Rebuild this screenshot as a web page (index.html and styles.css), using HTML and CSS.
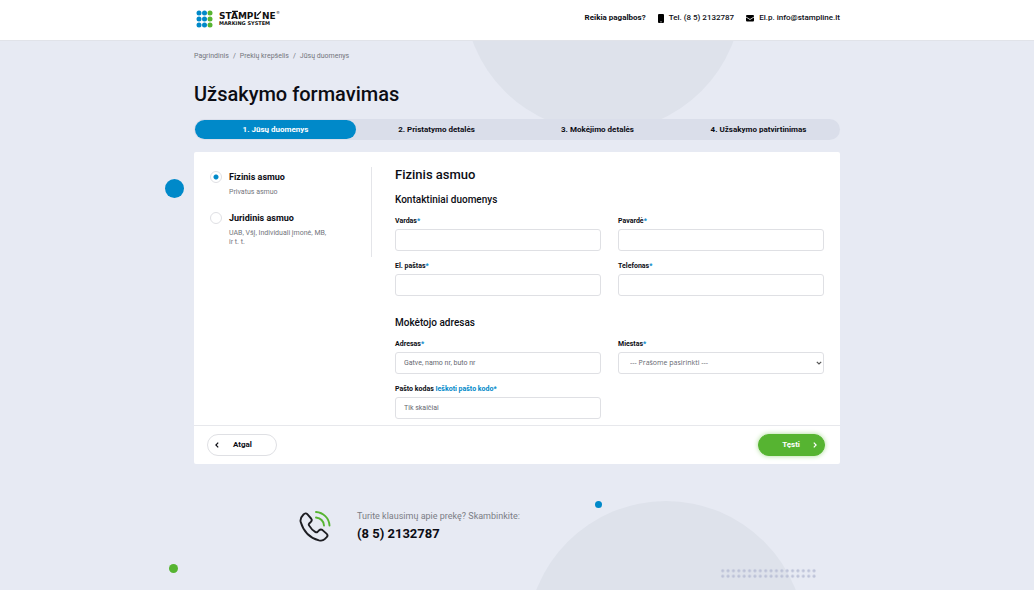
FILE: index.html
```html
<!DOCTYPE html>
<html lang="lt">
<head>
<meta charset="utf-8">
<meta name="viewport" content="width=device-width, initial-scale=1">
<title>Užsakymo formavimas</title>
<link rel="stylesheet" href="styles.css">
</head>
<body>
<header class="header">
  <div class="container header-row">
    <a class="logo" href="#" aria-label="Stampline Marking System">
      <svg width="86" height="20" viewBox="0 0 86 20">
        <g fill="#0089c9">
          <circle cx="5" cy="3" r="2.5"/><circle cx="10.5" cy="3" r="2.5"/>
          <circle cx="5" cy="9" r="2.5"/><circle cx="10.5" cy="9" r="2.5"/>
          <circle cx="5" cy="15" r="2.5"/><circle cx="10.5" cy="15" r="2.5"/>
        </g>
        <g fill="#56b431">
          <circle cx="16" cy="3" r="2.5"/><circle cx="16" cy="9" r="2.5"/><circle cx="16" cy="15" r="2.5"/>
        </g>
        <g class="logo-text">
          <text class="logo-name" x="25" y="9">STAMPL</text>
          <text class="logo-name" x="68" y="9">NE</text>
          <text class="logo-sub" x="25" y="15">MARKING SYSTEM</text>
          <text class="logo-mark" x="82" y="4">®</text>
        </g>
        <path d="M38 1.400h6M63 5.500l4-4" stroke="#111" stroke-width="1.100" fill="none"/>
      </svg>
    </a>
    <div class="contacts">
      <strong>Reikia pagalbos?</strong>
      <a class="contact" href="tel:+37052132787">
        <svg width="6" height="9" viewBox="0 0 6 9"><rect width="6" height="9" rx="1"/><circle cx="3" cy="7.8" r=".6" fill="#fff"/></svg>
        Tel. (8 5) 2132787
      </a>
      <a class="contact" href="mailto:info@stampline.lt">
        <svg width="8" height="7" viewBox="0 0 8 7"><rect width="8" height="6.5" rx="1"/><path d="M0 2l4 2.500L8 2" fill="none" stroke="#fff" stroke-width=".8"/></svg>
        El.p. info@stampline.lt
      </a>
    </div>
  </div>
</header>

<main class="page">
  <div class="decor" aria-hidden="true">
    <span class="blob blob-top"></span>
    <span class="blob blob-bottom"></span>
    <span class="dot dot-large"></span>
    <span class="dot dot-small"></span>
    <span class="dot dot-green"></span>
    <span class="dot-grid"></span>
  </div>
  <div class="container content">
    <nav class="crumbs" aria-label="Kelias">
      <a href="#">Pagrindinis</a><span>/</span><a href="#">Prekių krepšelis</a><span>/</span><a href="#">Jūsų duomenys</a>
    </nav>
    <h1 class="title">Užsakymo formavimas</h1>
    <ol class="steps">
      <li class="step step-active">1. Jūsų duomenys</li>
      <li class="step">2. Pristatymo detalės</li>
      <li class="step">3. Mokėjimo detalės</li>
      <li class="step">4. Užsakymo patvirtinimas</li>
    </ol>

    <form class="card">
      <div class="card-body">
        <div class="types">
          <div class="type">
            <input class="radio" type="radio" name="type" id="person" checked>
            <div>
              <label class="type-name" for="person">Fizinis asmuo</label>
              <p class="type-note">Privatus asmuo</p>
            </div>
          </div>
          <div class="type">
            <input class="radio" type="radio" name="type" id="company">
            <div>
              <label class="type-name" for="company">Juridinis asmuo</label>
              <p class="type-note">UAB, VšĮ, Individuali įmonė, MB,<br>ir t. t.</p>
            </div>
          </div>
        </div>
        <div class="fields">
          <h2 class="heading">Fizinis asmuo</h2>
          <h3 class="subheading">Kontaktiniai duomenys</h3>
          <div class="grid">
            <div class="field"><label class="label" for="first">Vardas<span class="accent">*</span></label><input class="control" id="first" type="text"></div>
            <div class="field"><label class="label" for="last">Pavardė<span class="accent">*</span></label><input class="control" id="last" type="text"></div>
            <div class="field"><label class="label" for="email">El. paštas<span class="accent">*</span></label><input class="control" id="email" type="email"></div>
            <div class="field"><label class="label" for="phone">Telefonas<span class="accent">*</span></label><input class="control" id="phone" type="tel"></div>
          </div>
          <h3 class="subheading subheading-next">Mokėtojo adresas</h3>
          <div class="grid">
            <div class="field"><label class="label" for="address">Adresas<span class="accent">*</span></label><input class="control" id="address" type="text" placeholder="Gatve, namo nr, buto nr"></div>
            <div class="field"><label class="label" for="city">Miestas<span class="accent">*</span></label>
              <div class="select-wrap">
                <select class="control select" id="city"><option>--- Prašome pasirinkti ---</option></select>
                <svg class="select-arrow" width="6" height="4" viewBox="0 0 6 4"><path d="M.8.8L3 3 5.200.8" fill="none" stroke="#555" stroke-width="1.200"/></svg>
              </div>
            </div>
            <div class="field"><div class="label"><label for="zip">Pašto kodas</label> <a class="accent" href="#">Ieškoti pašto kodo*</a></div><input class="control" id="zip" type="text" placeholder="Tik skaičiai"></div>
          </div>
        </div>
      </div>
      <div class="card-footer">
        <button class="btn btn-back" type="button">
          <svg width="4" height="6" viewBox="0 0 4 6"><path d="M3.200.6L.9 3l2.300 2.400" fill="none" stroke="currentColor" stroke-width="1.200"/></svg>
          <span>Atgal</span>
        </button>
        <button class="btn btn-next" type="submit">
          <span>Tęsti</span>
          <svg width="4" height="6" viewBox="0 0 4 6"><path d="M.8.6L3.100 3 .8 5.400" fill="none" stroke="currentColor" stroke-width="1.200"/></svg>
        </button>
      </div>
    </form>

    <section class="help">
      <svg width="32" height="32" viewBox="0 0 32 32" fill="none" stroke-linecap="round" stroke-linejoin="round">
        <path d="M4.500 4.500C5.800 3.200 7.200 3 8.300 4.200l3.800 4.300c.9 1.100.8 2.300-.2 3.300l-1.700 1.700c-.5.600-.6 1.200-.2 1.900 1.600 2.800 3.700 5 6.500 6.700.8.400 1.400.300 2-.2l1.600-1.600c1.100-1 2.300-1.100 3.400-.2l4 3.500c1.300 1.200 1.300 2.400.2 3.600l-2 2c-1.400 1.400-3.500 1.700-5.700 1.200C11.500 28.200 4.500 21.500 1.700 12 .8 8.800 1.700 7.300 4.500 4.500z" stroke="#1d1d22" stroke-width="1.900"/>
        <path d="M17 2c7.300.5 13 6 13.500 13.500M17 7.500c4.500.5 7.500 3.500 8 8" stroke="#56b431" stroke-width="1.900"/>
      </svg>
      <div>
        <p class="help-text">Turite klausimų apie prekę? Skambinkite:</p>
        <a class="help-phone" href="tel:+37052132787">(8 5) 2132787</a>
      </div>
    </section>
  </div>
</main>
</body>
</html>
```

FILE: styles.css
```css
* { box-sizing: border-box; }

body {
  margin: 0;
  background: #fff;
  color: #0c0d14;
  font-family: Roboto, "Noto Sans", sans-serif;
  font-size: 8px;
  line-height: 10px;
}

a { color: inherit; text-decoration: none; }
h1, h2, h3, p, ol { margin: 0; padding: 0; }
h1, h2, h3 { font-weight: 500; }
svg { display: block; flex: none; }

.container {
  width: 100%;
  max-width: 646px;
  margin: 0 auto;
}

/* Header */
.header { border-bottom: 1px solid #e1e3e9; }
.header-row {
  display: flex;
  justify-content: space-between;
  padding: 10px 0;
}
.logo-text { fill: #111; font-family: "DejaVu Sans", sans-serif; font-weight: 700; }
.logo-name { font-size: 9px; }
.logo-sub { font-size: 5px; }
.logo-mark { font-size: 4px; font-weight: 400; }
.contacts {
  display: flex;
  align-items: center;
  gap: 12px;
  height: 16px;
  font-weight: 500;
}
.contacts strong { font-weight: 700; }
.contact { display: flex; align-items: center; gap: 5px; }

/* Page background */
.page { position: relative; overflow: hidden; background: #e7eaf3; }
.decor { position: absolute; inset: 0; }
.blob, .dot, .dot-grid { position: absolute; border-radius: 50%; }
.blob { width: 278px; height: 278px; background: #dee2eb; }
.blob-top { top: -187px; left: calc(50% - 53px); }
.blob-bottom { bottom: -189px; left: calc(50% + 10px); }
.dot { background: #0089c9; }
.dot-large { top: 138px; left: calc(50% - 352px); width: 19px; height: 19px; }
.dot-small { bottom: 82px; left: calc(50% + 78px); width: 7px; height: 7px; }
.dot-green { bottom: 17px; left: calc(50% - 348px); width: 9px; height: 9px; background: #56b431; }
.dot-grid {
  bottom: 11px;
  left: calc(50% + 203px);
  width: 97px;
  height: 11px;
  border-radius: 0;
  background: radial-gradient(circle, #b3b9d2 1px, transparent 2px) 0 0 / calc(100% / 18) 50%;
  opacity: .8;
}

.content { position: relative; }
.crumbs {
  display: flex;
  gap: 4px;
  padding-top: 10px;
  color: #73757c;
  font-size: 7px;
}
.title {
  padding: 21px 0 13px;
  font-size: 20px;
  line-height: 24px;
}

/* Steps */
.steps {
  display: grid;
  grid-template-columns: repeat(4, 1fr);
  padding: 1px;
  border-radius: 11px;
  background: #dadeea;
  list-style: none;
}
.step {
  border-radius: 10px;
  font-weight: 700;
  line-height: 19px;
  text-align: center;
}
.step-active { background: #0089c9; color: #fff; }

/* Card */
.card { margin-top: 12px; border-radius: 2px; background: #fff; }
.card-body {
  display: grid;
  grid-template-columns: 178px 1fr;
  gap: 23px;
  align-items: start;
  padding: 15px 16px 6px 0;
}
.types {
  display: grid;
  gap: 15px;
  padding: 4px 0 10px 16px;
  border-right: 1px solid #e4e5e9;
}
.type { display: flex; gap: 7px; }
.radio {
  appearance: none;
  flex: none;
  width: 12px;
  height: 12px;
  margin: 0;
  border: 1px solid #dfe0e4;
  border-radius: 50%;
}
.radio:checked { background: radial-gradient(circle, #0089c9 2px, transparent 3px); }
.type-name { display: block; font-size: 9px; font-weight: 700; line-height: 12px; }
.type-note { padding-top: 5px; color: #73757c; font-size: 7px; line-height: 9px; }

.heading { font-size: 13px; line-height: 16px; }
.subheading { margin: 11px 0 10px; font-size: 10px; line-height: 12px; }
.subheading-next { margin-top: 21px; }
.grid {
  display: grid;
  grid-template-columns: 1fr 1fr;
  gap: 10px 17px;
}
.label { display: block; margin-bottom: 3px; font-size: 7px; font-weight: 700; line-height: 10px; }
.accent { color: #0089c9; }
.control {
  display: block;
  width: 100%;
  height: 22px;
  padding: 0 8px;
  border: 1px solid #dfe0e4;
  border-radius: 3px;
  background: #fff;
  color: #666870;
  font: inherit;
  font-size: 7px;
}
.control::placeholder { color: #666870; opacity: 1; }
.select-wrap { position: relative; }
.select { appearance: none; padding-left: 11px; font-family: "Open Sans", "Noto Sans", sans-serif; }
.select-arrow { position: absolute; top: 9px; right: 2px; pointer-events: none; }

.card-footer {
  display: flex;
  justify-content: space-between;
  padding: 8px 15px 8px 13px;
  border-top: 1px solid #e7e8ec;
}
.btn {
  display: flex;
  align-items: center;
  height: 22px;
  padding: 0 7px;
  border: 1px solid #dfe0e4;
  border-radius: 11px;
  background: #fff;
  color: #0c0d14;
  font: inherit;
  font-weight: 700;
}
.btn-back { gap: 14px; width: 70px; }
.btn-next {
  justify-content: flex-end;
  gap: 13px;
  width: 67px;
  border-color: #56b431;
  background: #56b431;
  box-shadow: 0 0 5px #a9dc93;
  color: #fff;
}

/* Help */
.help {
  display: flex;
  gap: 26px;
  padding: 46px 0 48px 105px;
}
.help-text { color: #7b7d85; font-size: 9px; line-height: 12px; }
.help-phone { display: block; padding-top: 4px; font-size: 13px; font-weight: 700; line-height: 16px; }
```
